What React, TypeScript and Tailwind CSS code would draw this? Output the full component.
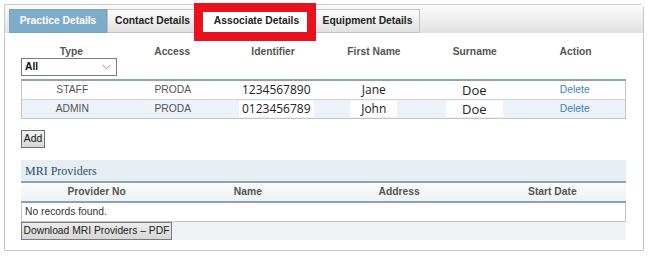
import React from "react";

const Chevron = () => (
  <svg width="9" height="6" viewBox="0 0 9 6" aria-hidden="true">
    <path d="M0.5 0.8 L4.5 4.8 L8.5 0.8" fill="none" stroke="#888" strokeWidth="0.9" />
  </svg>
);

const headers = ["Access", "Identifier", "First Name", "Surname", "Action"];

export default function App() {
  return (
    <div className="relative w-[650px] h-[257px] bg-white pl-[4px] pt-[4px] font-['Liberation_Sans',Arial,sans-serif] text-[10.3px] leading-[12px] text-[#555]">
      <div className="w-[640px] h-[247px] border border-[#c8c8c8] rounded-tr-[4px] flex flex-col">
        {/* tab bar */}
        <div className="h-[28px] shrink-0 bg-gradient-to-b from-[#fbfbfb] to-[#e2e2e2] pl-[4px] flex items-end">
          <div className="h-[24px] w-[98px] bg-[#7eadcb] border border-[#74a2c0] text-white font-bold flex items-center justify-center">
            Practice Details
          </div>
          <div className="h-[24px] w-[91px] bg-gradient-to-b from-[#fdfdfd] to-[#e0e0e0] border border-[#c2c2c2] text-[#222] font-bold flex items-center justify-center">
            Contact Details
          </div>
          <div className="h-[24px] w-[117px] bg-white text-[#222] font-bold flex items-center justify-center">
            Associate Details
          </div>
          <div className="h-[24px] w-[105px] bg-gradient-to-b from-[#fdfdfd] to-[#e0e0e0] border border-[#c2c2c2] text-[#222] font-bold flex items-center justify-center">
            Equipment Details
          </div>
        </div>

        {/* content */}
        <div className="px-[16px] pt-[13px] flex flex-col">
          {/* header */}
          <div className="w-[605px] grid grid-cols-6 font-bold text-[#555]">
            <div className="flex flex-col">
              <div className="text-center">Type</div>
              <div className="h-[18px] w-[96px] border border-[#7a7a7a] bg-white flex items-center justify-between pl-[3px] pr-[5px] text-[#111]">
                <span>All</span>
                <Chevron />
              </div>
            </div>
            {headers.map((h) => (
              <div key={h} className="text-center">
                {h}
              </div>
            ))}
          </div>

          {/* associates table */}
          <div className="mt-[3px] w-[605px] border-t-2 border-t-[#8ea2ac] border-x border-b border-x-[#c4c4c4] border-b-[#c4c4c4]">
            <div className="h-[19px] grid grid-cols-6 items-center border-b border-[#d0d6da] bg-white">
              <div className="text-center">STAFF</div>
              <div className="text-center">PRODA</div>
              <div className="text-center font-['Open_Sans',sans-serif] text-[12px] text-[#222] pl-[6px]">1234567890</div>
              <div className="text-center font-['Open_Sans',sans-serif] text-[12px] text-[#222]">Jane</div>
              <div className="text-center font-['Open_Sans',sans-serif] text-[13px] text-[#222]">Doe</div>
              <div className="text-center text-[#3f83c1]">Delete</div>
            </div>
            <div className="h-[18px] grid grid-cols-6 items-center bg-[#edf2f8]">
              <div className="text-center">ADMIN</div>
              <div className="text-center">PRODA</div>
              <div className="flex justify-center pl-[6px]">
                <span className="bg-white px-[3px] font-['Open_Sans',sans-serif] text-[12px] leading-[16px] text-[#222]">0123456789</span>
              </div>
              <div className="flex justify-center">
                <span className="bg-white px-[11px] font-['Open_Sans',sans-serif] text-[12px] leading-[16px] text-[#222]">John</span>
              </div>
              <div className="flex justify-center">
                <span className="bg-white px-[16px] font-['Open_Sans',sans-serif] text-[13px] leading-[16px] text-[#222]">Doe</span>
              </div>
              <div className="text-center text-[#3f83c1]">Delete</div>
            </div>
          </div>

          {/* add button */}
          <div className="mt-[11px]">
            <div className="h-[18px] w-[24px] border border-[#707070] bg-gradient-to-b from-[#f2f2f2] to-[#d8d8d8] text-[#111] flex items-center justify-center">
              Add
            </div>
          </div>

          {/* MRI providers */}
          <div className="mt-[12px] w-[605px] flex flex-col">
            <div className="h-[21px] bg-[#e7eef2] pl-[4px] flex items-center font-['Liberation_Serif',serif] text-[12px] text-[#2b5071]">
              MRI Providers
            </div>
            <div className="h-[22px] border-y-2 border-[#8ea2ac] bg-gradient-to-b from-[#f9fbfc] to-[#edf2f5] grid grid-cols-4 items-center font-bold text-[#555]">
              <div className="text-center">Provider No</div>
              <div className="text-center">Name</div>
              <div className="text-center">Address</div>
              <div className="text-center pl-[4px]">Start Date</div>
            </div>
            <div className="h-[19px] border-x border-b border-[#c4c4c4] bg-white pl-[3px] flex items-center text-[#333]">
              No records found.
            </div>
            <div className="h-[18px] bg-[#eef2f5] flex">
              <div className="h-[18px] w-[151px] border border-[#7a7a7a] bg-gradient-to-b from-[#ececec] to-[#d6d6d6] text-[#222] flex items-center justify-center">
                Download MRI Providers – PDF
              </div>
            </div>
          </div>
        </div>
      </div>

      {/* red highlight annotation */}
      <div className="absolute left-[194px] top-[3px] w-[122px] h-[38px] border-[9px] border-[#e8111c]" />
    </div>
  );
}
